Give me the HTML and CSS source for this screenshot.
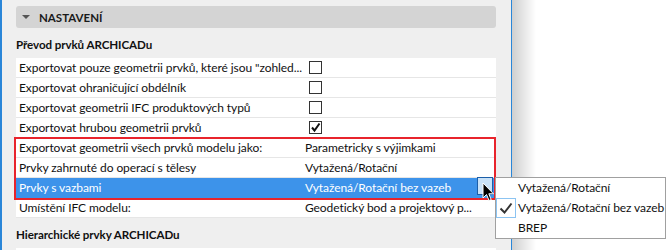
FILE: index.html
```html
<!DOCTYPE html>
<html>
<head>
<meta charset="utf-8">
<link rel="stylesheet" href="styles.css">
</head>
<body>
<div class="screen">
  <div class="panel">
    <div class="section-header"><span class="tri"></span>NASTAVENÍ</div>
    <div class="group-title">Převod prvků ARCHICADu</div>
    <div class="table">
      <div class="row"><div class="label">Exportovat pouze geometrii prvků, které jsou "zohled...</div><div class="value"><span class="cb"></span></div></div>
      <div class="row"><div class="label">Exportovat ohraničující obdélník</div><div class="value"><span class="cb"></span></div></div>
      <div class="row"><div class="label">Exportovat geometrii IFC produktových typů</div><div class="value"><span class="cb"></span></div></div>
      <div class="row"><div class="label">Exportovat hrubou geometrii prvků</div><div class="value"><span class="cb"><svg viewBox="0 0 11 11" width="11" height="11"><path d="M2 5.5 L4.5 8.5 L9.5 1.5" fill="none" stroke="#111" stroke-width="2"/></svg></span></div></div>
      <div class="row"><div class="label">Exportovat geometrii všech prvků modelu jako:</div><div class="value">Parametricky s výjimkami</div></div>
      <div class="row"><div class="label">Prvky zahrnuté do operací s tělesy</div><div class="value">Vytažená/Rotační</div></div>
      <div class="row selected"><div class="label">Prvky s vazbami</div><div class="value">Vytažená/Rotační bez vazeb</div><span class="dd-btn"></span></div>
      <div class="row"><div class="label">Umístění IFC modelu:</div><div class="value">Geodetický bod a projektový p...</div></div>
      <div class="highlight"></div>
    </div>
    <div class="group-title">Hierarchické prvky ARCHICADu</div>
    <div class="table"><div class="row"></div></div>
  </div>
  <div class="shadow"></div>
  <div class="popup">
    <div class="item">Vytažená/Rotační</div>
    <div class="item checked"><span class="check"><svg viewBox="0 0 18 18" width="18" height="18"><path d="M3.5 9.5 L7.5 13.5 L14.5 4.5" fill="none" stroke="#333" stroke-width="2"/></svg></span>Vytažená/Rotační bez vazeb</div>
    <div class="item">BREP</div>
  </div>
  <svg class="cursor" viewBox="0 0 13 21" width="13" height="21"><path d="M1 1 L1 16 L4.5 12.5 L7 18.5 L9.2 17.6 L6.8 11.8 L11.5 11.8 Z" fill="#000" stroke="#fff" stroke-width="1"/></svg>
</div>
</body>
</html>
```
FILE: styles.css
```css
* { box-sizing: border-box; }
html, body { margin: 0; padding: 0; background: #fff; }
body {
  font-family: Lato, "Noto Sans", sans-serif;
  font-size: 12px;
  letter-spacing: -0.08px;
  color: #000;
}
.screen {
  position: relative;
  width: 666px;
  height: 250px;
  overflow: hidden;
  display: flex;
  background: #fff;
}
.panel {
  width: 512px;
  flex: none;
  background: #efefef;
  border-left: 2px solid #2a86d8;
  border-right: 1px solid #2a86d8;
  padding: 6px 15px 0 14px;
}
.shadow {
  width: 24px;
  flex: none;
  background: linear-gradient(to right, #cfcfcf, #fff);
}
.section-header {
  height: 22px;
  background: #d4d4d4;
  border-radius: 3px;
  display: flex;
  align-items: center;
  padding-left: 6px;
  font-weight: bold;
  font-size: 11.5px;
  letter-spacing: 0;
  color: #1a1a1a;
}
.tri {
  width: 0; height: 0;
  border-left: 4px solid transparent;
  border-right: 4px solid transparent;
  border-top: 4px solid #555;
  margin-right: 9px;
}
.group-title {
  height: 30px;
  padding-top: 9px;
  line-height: 16px;
  font-weight: bold;
  font-size: 11.6px;
  color: #111;
}
.table {
  position: relative;
  background: #fff;
}
.row {
  position: relative;
  height: 20px;
  border-bottom: 1px solid #e6e6e6;
  display: flex;
  align-items: center;
  line-height: 19px;
  color: #111;
}
.row.selected {
  background: #3d93ea;
  color: #fff;
  border-bottom-color: #3d93ea;
}
.label {
  width: 286px;
  flex: none;
  padding-left: 3px;
  white-space: nowrap;
}
.value {
  flex: 1;
  padding-left: 3px;
  white-space: nowrap;
  display: flex;
  align-items: center;
}
.cb {
  width: 13px;
  height: 13px;
  border: 1px solid #333;
  margin-left: 4px;
  background: #fff;
  display: flex;
  align-items: center;
  justify-content: center;
}
.cb svg { display: block; }
.dd-btn {
  position: absolute;
  right: 3px;
  top: -1px;
  width: 16px;
  height: 18px;
  background: #c9e2f8;
  border: 1px solid #1c5ea8;
}
.highlight {
  position: absolute;
  left: -2px;
  top: 79px;
  width: 482px;
  height: 63px;
  border: 2px solid #e8242c;
  pointer-events: none;
}
.popup {
  position: absolute;
  left: 495px;
  top: 177px;
  width: 171px;
  height: 62px;
  background: #fff;
  border: 1px solid #a0a0a0;
}
.item {
  position: relative;
  height: 20px;
  line-height: 20px;
  padding-left: 22px;
  color: #111;
  white-space: nowrap;
}
.check {
  position: absolute;
  left: 0;
  top: 0;
  width: 20px;
  height: 20px;
  border: 1px solid #8cc4f2;
  display: flex;
  align-items: center;
  justify-content: center;
}
.check svg { display: block; }
.cursor {
  position: absolute;
  left: 482px;
  top: 182px;
}
```
